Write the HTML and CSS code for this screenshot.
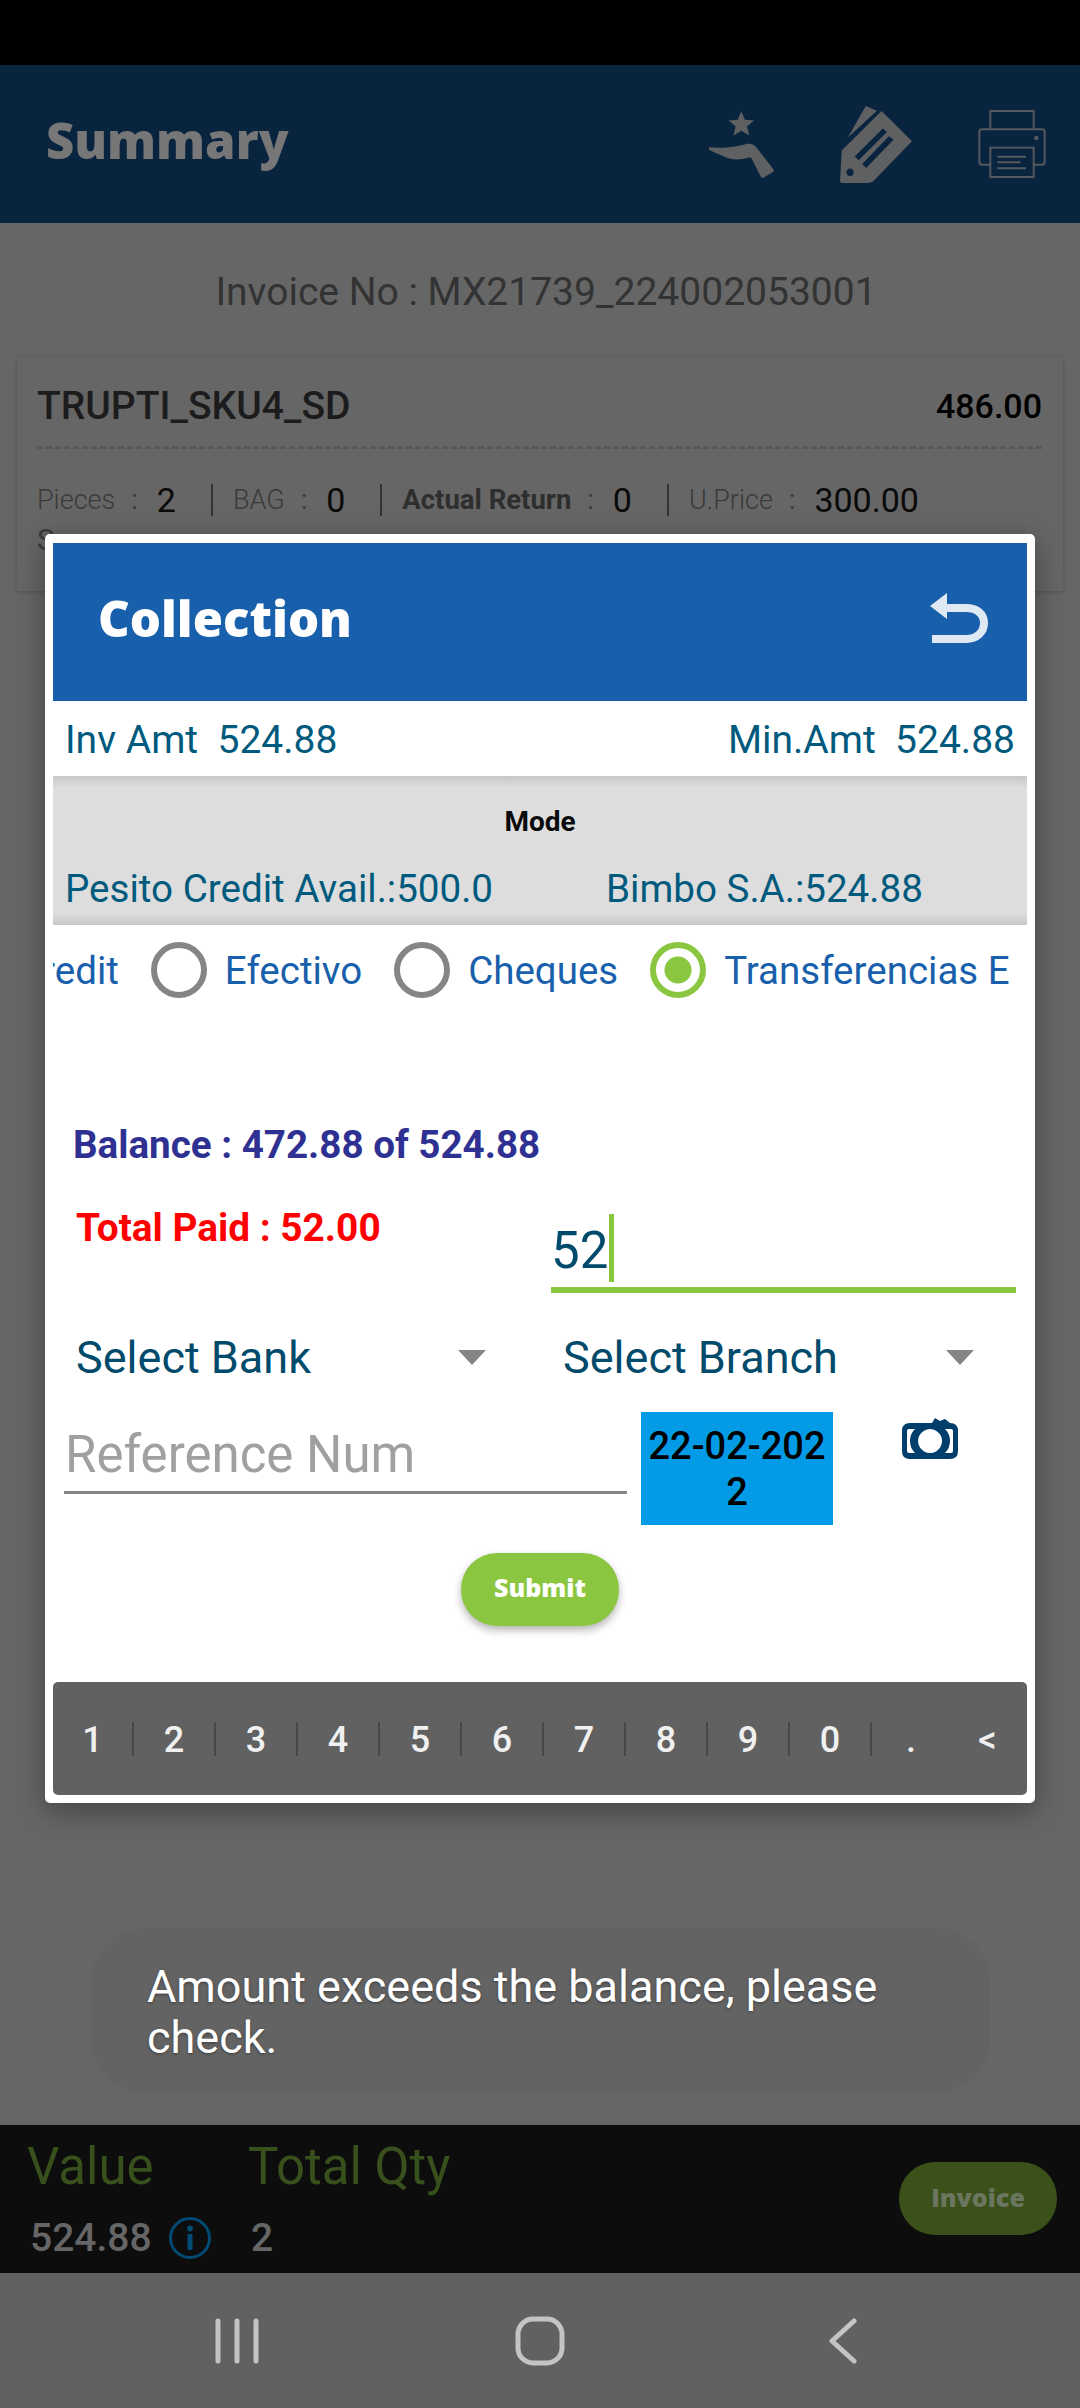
FILE: index.html
```html
<!DOCTYPE html>
<html lang="en">
<head>
    <meta charset="UTF-8">
    <meta name="viewport" content="width=device-width, initial-scale=1.0">
    <title>Summary</title>
    <link rel="stylesheet" href="styles.css">
</head>
<body>
    <div class="status-bar"></div>

    <header class="app-bar">
        <h1 class="app-title">Summary</h1>
        <div class="app-actions">
            <svg class="icon-hand" viewBox="85 90 195 200">
                <path fill="#5f6062" d="M182 90l11 26 27 2-21 18 7 27-24-14-24 14 7-27-21-18 27-2z"/>
                <path fill="#5f6062" d="M85 198c30 2 70 4 115-10 12-2 20 2 28 12l50 64c3 5 1 8-3 10l-26 15c-4 2-7 1-9-3l-26-52c-2-5-5-6-12-4-30 8-50 6-72-4-18-8-36-16-52-24z"/>
            </svg>
            <svg class="icon-tag" viewBox="480 75 215 230">
                <path fill="#5f6062" d="M503 170l54-95 33 14z"/>
                <path fill="#5f6062" fill-rule="evenodd" d="M485 208L604 90l91 90-118 122-12 3h-81l-4-5zM608 142L524 226l12 11 84-84zM626 165L546 248l12 12 82-84zM510 262a11 11 0 1 0 .1 0z"/>
            </svg>
            <svg class="icon-print" viewBox="895 88 202 204" fill="none" stroke="#55595e" stroke-width="6">
                <path d="M931 146V91h130v55"/>
                <path d="M931 252h-24q-9 0-9-9v-88q0-9 9-9h178q9 0 9 9v88q0 9-9 9h-24"/>
                <rect x="931" y="201" width="130" height="88"/>
                <path d="M952 228h86M952 245h70M952 263h86"/>
                <circle cx="1069" cy="172" r="7" fill="#55595e" stroke="none"/>
            </svg>
        </div>
    </header>

    <main class="summary">
        <p class="invoice-no">Invoice No : MX21739_224002053001</p>
        <section class="item-card">
            <div class="item-head">
                <span class="item-name">TRUPTI_SKU4_SD</span>
                <span class="item-total">486.00</span>
            </div>
            <div class="item-stats">
                <span class="stat-label">Pieces</span><span class="stat-colon">:</span><span class="stat-value">2</span>
                <span class="stat-sep"></span>
                <span class="stat-label">BAG</span><span class="stat-colon">:</span><span class="stat-value">0</span>
                <span class="stat-sep"></span>
                <span class="stat-label stat-strong">Actual Return</span><span class="stat-colon">:</span><span class="stat-value">0</span>
                <span class="stat-sep"></span>
                <span class="stat-label">U.Price</span><span class="stat-colon">:</span><span class="stat-value">300.00</span>
            </div>
            <div class="item-more">S</div>
        </section>
    </main>

    <footer class="totals">
        <div class="totals-col">
            <span class="totals-label">Value</span>
            <div class="totals-value">
                524.88
                <svg class="icon-info" viewBox="0 0 42 44">
                    <circle cx="21" cy="22" r="19.5" fill="none" stroke="#004a73" stroke-width="3"/>
                    <circle cx="21" cy="12.5" r="3" fill="#004a73"/>
                    <rect x="18.5" y="18" width="5" height="16" fill="#004a73"/>
                </svg>
            </div>
        </div>
        <div class="totals-col">
            <span class="totals-label">Total Qty</span>
            <div class="totals-value">2</div>
        </div>
        <div class="invoice-btn">Invoice</div>
    </footer>

    <nav class="nav-bar">
        <svg class="nav-recent" viewBox="0 0 44 46" stroke="#c4c4c4" stroke-width="5" stroke-linecap="round">
            <path d="M3 3v40M22 3v40M41 3v40"/>
        </svg>
        <svg class="nav-home" viewBox="0 0 50 50" fill="none" stroke="#c4c4c4" stroke-width="5">
            <rect x="3" y="3" width="44" height="44" rx="15"/>
        </svg>
        <svg class="nav-back" viewBox="0 0 28 46" fill="none" stroke="#c4c4c4" stroke-width="5" stroke-linecap="round" stroke-linejoin="round">
            <path d="M25 3L3 23l22 20"/>
        </svg>
    </nav>

    <div class="dialog">
        <div class="dialog-head">
            <h2 class="dialog-title">Collection</h2>
            <svg class="icon-return" viewBox="0 0 60 54" fill="none">
                <path d="M14 16h22c11 0 18 6 18 15s-7 16-18 16H2" stroke="#dfe9f4" stroke-width="8"/>
                <path d="M0 14L17 1v26z" fill="#dfe9f4"/>
            </svg>
        </div>

        <div class="amounts">
            <span>Inv Amt&nbsp; 524.88</span>
            <span>Min.Amt&nbsp; 524.88</span>
        </div>

        <div class="mode-band">
            <div class="mode-title">Mode</div>
            <div class="mode-credit">
                <span>Pesito Credit Avail.:500.0</span>
                <span>Bimbo S.A.:524.88</span>
            </div>
        </div>

        <div class="radio-row">
            <span class="radio-label radio-first">Credit</span>
            <span class="radio"></span><span class="radio-label">Efectivo</span>
            <span class="radio"></span><span class="radio-label">Cheques</span>
            <span class="radio radio-on"></span><span class="radio-label">Transferencias E</span>
        </div>

        <div class="balance">Balance : 472.88 of 524.88</div>

        <div class="paid-row">
            <div class="total-paid">Total Paid : 52.00</div>
            <div class="amount-input"><span>52</span><i class="caret"></i></div>
        </div>

        <div class="select-row">
            <div class="select select-bank">Select Bank<i class="select-arrow"></i></div>
            <div class="select select-branch">Select Branch<i class="select-arrow"></i></div>
        </div>

        <div class="ref-row">
            <div class="ref-input">Reference Num</div>
            <div class="date-box">22-02-202<br>2</div>
            <svg class="icon-camera" viewBox="0 0 56 42">
                <path fill="#003f6b" fill-rule="evenodd" d="M8 6h22l3-5 5 3 5-2 5 4q8 0 8 8v20q0 8-8 8H8q-8 0-8-8V14q0-8 8-8zM7 12q-2 0-2 2v20q0 2 2 2h6q-5-5-5-12t5-12zM43 12q5 5 5 12t-5 12h6q2 0 2-2V14q0-2-2-2zM28 12a12 12 0 1 0 .1 0z"/>
            </svg>
        </div>

        <div class="submit-wrap"><div class="submit-btn">Submit</div></div>

        <div class="keypad">
            <span class="key">1</span>
            <span class="key">2</span>
            <span class="key">3</span>
            <span class="key">4</span>
            <span class="key">5</span>
            <span class="key">6</span>
            <span class="key">7</span>
            <span class="key">8</span>
            <span class="key">9</span>
            <span class="key">0</span>
            <span class="key key-plain">.</span>
            <span class="key key-plain">&lt;</span>
        </div>
    </div>

    <div class="toast">Amount exceeds the balance, please check.</div>
</body>
</html>
```

FILE: styles.css
```css
* {
    box-sizing: border-box;
}

html, body {
    margin: 0;
    padding: 0;
}

body {
    position: relative;
    width: 1080px;
    height: 2408px;
    overflow: hidden;
    display: flex;
    flex-direction: column;
    background: #666;
    font-family: Roboto, sans-serif;
}

.status-bar {
    height: 65px;
    background: #000;
}

.app-bar {
    height: 158px;
    background: #08243f;
    display: flex;
    align-items: center;
    padding: 0 34px 0 46px;
}

.app-title {
    margin: 0 0 8px;
    font-family: "Open Sans", sans-serif;
    font-size: 49px;
    font-weight: 800;
    color: #777;
}

.app-actions {
    margin-left: auto;
    display: flex;
    align-items: center;
    gap: 66px;
}

.icon-hand {
    width: 65px;
    height: 67px;
}

.icon-tag {
    width: 72px;
    height: 77px;
}

.icon-print {
    width: 68px;
    height: 68px;
}

.summary {
    flex: 1;
    padding: 0 17px;
}

.invoice-no {
    margin: 45px 0 41px;
    padding-left: 12px;
    text-align: center;
    font-size: 39px;
    line-height: 48px;
    color: #333;
}

.item-card {
    height: 234px;
    padding: 26px 21px 0 20px;
    background: #666;
    box-shadow: 0 1px 4px rgba(0, 0, 0, 0.2);
}

.item-head {
    display: flex;
    justify-content: space-between;
    align-items: center;
    height: 46px;
    padding-bottom: 0;
}

.item-name {
    font-size: 39px;
    font-weight: 500;
    color: #1c1c1c;
}

.item-total {
    font-size: 34px;
    font-weight: 500;
    color: #000;
}

.item-stats {
    display: flex;
    align-items: center;
    margin-top: 17px;
    padding-top: 30px;
    border-top: 3px dashed #575757;
    height: 74px;
}

.stat-label {
    font-size: 27px;
    font-weight: 300;
    color: #3a3a3a;
}

.stat-strong {
    font-size: 27.5px;
    font-weight: 700;
    color: #2e2e2e;
}

.stat-colon {
    margin: 0 18px 0 16px;
    font-size: 27px;
    color: #3a3a3a;
}

.stat-value {
    margin-left: 1px;
    font-size: 34px;
    color: #0a0a0a;
}

.stat-sep {
    width: 2px;
    height: 32px;
    margin: 0 20px 0 35px;
    background: #333;
}

.item-more {
    margin-top: 2px;
    font-size: 30px;
    color: #3a3a3a;
}

.totals {
    height: 148px;
    background: #0d0d0d;
    display: flex;
    align-items: flex-start;
    padding: 10px 23px 0 27px;
}

.totals-col {
    width: 221px;
}

.totals-label {
    display: block;
    font-size: 51px;
    line-height: 64px;
    color: #38501c;
}

.totals-value {
    display: flex;
    align-items: center;
    gap: 17px;
    height: 44px;
    margin-top: 17px;
    padding-left: 3px;
    font-size: 39px;
    font-weight: 500;
    color: #666;
}

.icon-info {
    width: 42px;
    height: 44px;
}

.invoice-btn {
    margin: 27px 0 0 auto;
    width: 158px;
    height: 73px;
    border-radius: 36px;
    background: #3a5219;
    color: #6b7560;
    font-family: "Open Sans", sans-serif;
    font-size: 25px;
    font-weight: 800;
    line-height: 70px;
    text-align: center;
}

.nav-bar {
    height: 135px;
    background: #616161;
    display: flex;
    align-items: flex-start;
    padding: 43px 0 0 215px;
}

.nav-recent {
    width: 44px;
    height: 46px;
    margin-top: 2px;
}

.nav-home {
    width: 50px;
    height: 50px;
    margin-left: 256px;
}

.nav-back {
    width: 28px;
    height: 46px;
    margin: 2px 0 0 264px;
}

.dialog {
    position: absolute;
    left: 45px;
    top: 534px;
    width: 990px;
    height: 1269px;
    padding: 9px 8px;
    background: #fff;
    border-radius: 5px;
    box-shadow: 0 8px 30px rgba(0, 0, 0, 0.35);
}

.dialog-head {
    height: 158px;
    background: #1860ab;
    display: flex;
    align-items: center;
    justify-content: space-between;
    padding: 0 37px 0 45px;
}

.dialog-title {
    margin: 0 0 8px;
    font-family: "Open Sans", sans-serif;
    font-size: 49px;
    font-weight: 800;
    color: #fff;
}

.icon-return {
    width: 60px;
    height: 54px;
    margin-bottom: 6px;
}

.amounts {
    display: flex;
    justify-content: space-between;
    align-items: center;
    height: 75px;
    padding: 3px 12px 0;
    font-size: 39px;
    color: #005a7d;
}

.mode-band {
    height: 149px;
    background: linear-gradient(#c8c8c8, #ddd 12px, #ddd calc(100% - 12px), #c8c8c8);
    text-align: center;
}

.mode-title {
    padding-top: 31px;
    font-size: 28px;
    line-height: 30px;
    font-weight: 700;
    color: #0a0a0a;
}

.mode-credit {
    display: flex;
    margin-top: 30px;
    padding-left: 12px;
    font-size: 38.6px;
    line-height: 44px;
    color: #005a7d;
    text-align: left;
}

.mode-credit span:first-child {
    width: 541px;
}

.radio-row {
    display: flex;
    align-items: center;
    height: 90px;
    overflow: hidden;
    white-space: nowrap;
    font-size: 38.5px;
    color: #1860ab;
}

.radio-first {
    margin-left: -36px;
}

.radio {
    flex: none;
    width: 56px;
    height: 56px;
    margin: 0 18px 0 0;
    border: 6px solid #858585;
    border-radius: 50%;
}

.radio-label {
    flex: none;
    margin-right: 32px;
}

.radio-on {
    border-color: #8ac640;
    background: radial-gradient(circle, #8ac640 0 13px, #fff 14px);
}

.balance {
    margin-top: 108px;
    padding-left: 20px;
    height: 44px;
    line-height: 44px;
    font-size: 38.6px;
    font-weight: 700;
    color: #2e3192;
}

.paid-row {
    display: flex;
    justify-content: space-between;
    height: 126px;
    padding: 0 11px 0 23px;
}

.total-paid {
    margin-top: 39px;
    font-size: 38.8px;
    line-height: 44px;
    font-weight: 700;
    color: #f00;
}

.amount-input {
    display: flex;
    width: 465px;
    height: 102px;
    margin-top: 24px;
    padding-top: 30px;
    border-bottom: 6px solid #8ac640;
    font-size: 51px;
    line-height: 60px;
    color: #004a6b;
}

.caret {
    width: 5px;
    height: 68px;
    margin: -7px 0 0 1px;
    background: #8ac640;
}

.select-row {
    display: flex;
    margin-top: 28px;
    height: 72px;
    font-size: 45px;
    color: #004a6b;
}

.select {
    display: flex;
    align-items: center;
}

.select-bank {
    width: 487px;
    padding-left: 23px;
}

.select-branch {
    flex: 1;
    padding-left: 23px;
}

.select-arrow {
    margin-left: auto;
    width: 0;
    height: 0;
    border-left: 14px solid transparent;
    border-right: 14px solid transparent;
    border-top: 15px solid #858585;
}

.select-bank .select-arrow {
    margin-right: 54px;
}

.select-branch .select-arrow {
    margin-right: 53px;
}

.ref-row {
    display: flex;
    align-items: flex-start;
    margin-top: 19px;
}

.ref-input {
    width: 563px;
    height: 82px;
    margin: 0 0 0 11px;
    padding: 13px 0 0 1px;
    border-bottom: 3px solid #858585;
    font-size: 51px;
    line-height: 60px;
    color: #a0a0a0;
}

.date-box {
    width: 192px;
    height: 113px;
    margin-left: 14px;
    background: #039be5;
    text-align: center;
    font-size: 38px;
    font-weight: 500;
    line-height: 46px;
    padding-top: 11px;
    color: #000;
}

.icon-camera {
    width: 56px;
    height: 42px;
    margin: 5px 0 0 69px;
}

.submit-wrap {
    display: flex;
    justify-content: center;
    margin-top: 28px;
}

.submit-btn {
    width: 158px;
    height: 73px;
    border-radius: 36px;
    background: #8ac640;
    box-shadow: 0 4px 8px rgba(0, 0, 0, 0.3);
    color: #fff;
    font-family: "Open Sans", sans-serif;
    font-size: 25px;
    font-weight: 800;
    line-height: 68px;
    text-align: center;
}

.keypad {
    display: flex;
    align-items: center;
    height: 113px;
    margin-top: 56px;
    background: #616161;
    border-radius: 5px;
}

.key {
    width: 82px;
    height: 34px;
    border-right: 2px solid #484848;
    color: #f0f0f0;
    font-size: 36px;
    font-weight: 500;
    line-height: 36px;
    text-align: center;
}

.key:first-child {
    width: 81px;
}

.key-plain {
    border-right: none;
    padding-right: 4px;
}

.key-plain:last-child {
    width: 71px;
}

.toast {
    position: absolute;
    left: 91px;
    top: 1928px;
    width: 899px;
    height: 165px;
    padding: 33px 56px 0;
    border-radius: 55px;
    background: #636363;
    color: #fff;
    font-size: 45px;
    line-height: 51px;
    text-shadow: 0 1px 3px rgba(0, 0, 0, 0.4);
}
```
